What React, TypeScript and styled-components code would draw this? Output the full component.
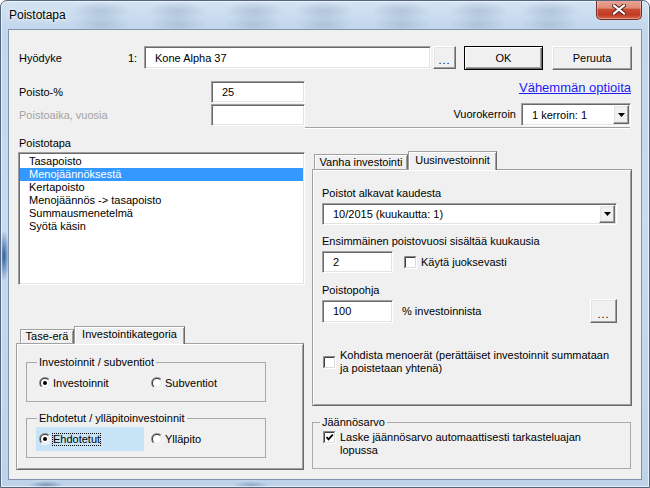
import React, { useId } from 'react';
import styled, { createGlobalStyle, css } from 'styled-components';

const FONT = `'Liberation Sans', Arial, sans-serif`;

const GlobalStyle = createGlobalStyle`
  html, body { margin: 0; padding: 0; background: #ffffff; }
  body { font-family: ${FONT}; font-size: 11px; color: #000; }
  *, *::before, *::after { box-sizing: border-box; }
`;

const sunken = css`
  border: 1px solid;
  border-color: #a0a0a0 #ffffff #ffffff #a0a0a0;
  box-shadow: inset 1px 1px 0 #696969, inset -1px -1px 0 #e3e3e3;
`;

const raised = css`
  border: 1px solid;
  border-color: #ffffff #696969 #696969 #ffffff;
  box-shadow: inset -1px -1px 0 #a0a0a0, inset 1px 1px 0 #e3e3e3;
  background: #f0f0f0;
`;

const blobXs = [100, 176, 253, 323, 400, 478, 549];
const titleBlobs = blobXs
  .flatMap((x) => [
    `radial-gradient(ellipse 30px 10px at ${x}px 10px, rgba(80,104,138,0.22), rgba(80,104,138,0))`,
    `radial-gradient(ellipse 30px 10px at ${x}px 23px, rgba(80,104,138,0.2), rgba(80,104,138,0))`,
  ])
  .join(', ');

const Window = styled.div`
  width: 650px;
  height: 488px;
  display: flex;
  flex-direction: column;
  padding: 0 7px 7px;
  border: 1px solid #52677f;
  border-radius: 7px 7px 0 0;
  overflow: hidden;
  background: ${titleBlobs},
    radial-gradient(ellipse 5px 26px at 3px 255px, rgba(20, 70, 140, 0.85), rgba(20, 70, 140, 0)),
    radial-gradient(ellipse 18px 4px at 45px 484px, rgba(60, 90, 130, 0.5), rgba(60, 90, 130, 0)),
    radial-gradient(ellipse 18px 4px at 250px 484px, rgba(60, 90, 130, 0.35), rgba(60, 90, 130, 0)),
    linear-gradient(180deg, #d3e3f3 0px, #c2d7ec 28px, #c8dbef 220px, #bed3e9 487px);
  box-shadow: inset 0 0 0 1px rgba(255, 255, 255, 0.6);
`;

const TitleBar = styled.header`
  height: 28px;
  flex: none;
  display: flex;
  justify-content: space-between;
  align-items: flex-start;
`;

const Title = styled.h1`
  margin: 7px 0 0 1px;
  font: 12px/14px ${FONT};
  font-weight: normal;
  color: #000;
  text-shadow: 0 0 6px #fff, 0 0 3px #fff;
`;

const CloseButton = styled.button`
  margin-top: -1px;
  width: 46px;
  height: 20px;
  padding: 0;
  border: 1px solid #6e3026;
  border-top: none;
  border-radius: 0 0 5px 5px;
  background: linear-gradient(180deg, #eaa898 0%, #de8a75 42%, #c94a33 50%, #c23a23 78%, #d66a50 100%);
  box-shadow: inset 0 0 0 1px rgba(255, 210, 200, 0.45);
  display: flex;
  align-items: center;
  justify-content: center;
`;

const Client = styled.main`
  flex: 1;
  background: #f0f0f0;
  border: 1px solid #7f93aa;
  padding: 16px 9px 0 7px;
  display: flex;
  flex-direction: column;
`;

const TopRow = styled.div`
  display: flex;
  align-items: flex-start;
  height: 24px;
`;

const RowLabel = styled.span<{ $w?: number; $ml?: number; $disabled?: boolean }>`
  flex: none;
  align-self: center;
  width: ${(p) => (p.$w ? `${p.$w}px` : 'auto')};
  margin-left: ${(p) => p.$ml ?? 0}px;
  color: ${(p) => (p.$disabled ? '#a3a3a3' : '#000')};
  line-height: 13px;
  white-space: nowrap;
`;

const TextBox = styled.div<{ $w: number; $h: number }>`
  ${sunken};
  flex: none;
  background: #fff;
  width: ${(p) => p.$w}px;
  height: ${(p) => p.$h}px;
  display: flex;
  align-items: center;
  padding-left: 10px;
  white-space: nowrap;
`;

const Button = styled.button<{ $w: number; $h: number; $ml?: number; $default?: boolean }>`
  ${raised};
  flex: none;
  width: ${(p) => p.$w}px;
  height: ${(p) => p.$h}px;
  margin-left: ${(p) => p.$ml ?? 0}px;
  padding: 0;
  font: 11px/13px ${FONT};
  color: #000;
  display: flex;
  align-items: center;
  justify-content: center;
  ${(p) =>
    p.$default &&
    css`
      border: 1px solid #000;
      box-shadow: inset 1px 1px 0 #fff, inset -1px -1px 0 #696969, inset -2px -2px 0 #a0a0a0;
    `}
`;

const DotsLabel = styled.span`
  padding-top: 6px;
  letter-spacing: 1px;
`;

const OptionsRow = styled.div`
  display: flex;
  justify-content: space-between;
  margin-top: 11px;
`;

const ParamGrid = styled.div`
  display: grid;
  grid-template-columns: 192px 94px;
  grid-template-rows: 22px 22px;
  row-gap: 1px;
  margin-left: 3px;
  align-items: center;
`;

const OptionsRight = styled.div`
  display: flex;
  flex-direction: column;
  align-items: flex-end;
  margin-top: -1px;
  padding-right: 1px;
`;

const Link = styled.a`
  font: 13px/15px ${FONT};
  height: 15px;
  color: #1d1df2;
  text-decoration: underline;
`;

const ShiftRow = styled.div`
  display: flex;
  align-items: center;
  gap: 5px;
  margin-top: 8px;
`;

const ComboBox = styled.div<{ $w: number; $h: number; $mt?: number }>`
  ${sunken};
  flex: none;
  width: ${(p) => p.$w}px;
  height: ${(p) => p.$h}px;
  margin-top: ${(p) => p.$mt ?? 0}px;
  background: #fff;
  display: flex;
  align-items: stretch;
`;

const ComboText = styled.span`
  flex: 1;
  display: flex;
  align-items: center;
  padding-left: 10px;
  white-space: nowrap;
`;

const DropButton = styled.span`
  ${raised};
  width: 16px;
  margin: 1px 1px 1px 0;
  display: flex;
  align-items: center;
  justify-content: center;
`;

const Separator = styled.div`
  margin: 1px 0 0 289px;
  width: 325px;
  height: 2px;
  border-top: 1px solid #a0a0a0;
  border-bottom: 1px solid #ffffff;
`;

const MainArea = styled.div`
  display: flex;
  align-items: flex-start;
  gap: 7px;
  margin-top: 8px;
`;

const LeftColumn = styled.section`
  width: 289px;
  display: flex;
  flex-direction: column;
`;

const RightColumn = styled.section`
  width: 320px;
  display: flex;
  flex-direction: column;
`;

const FieldLabel = styled.div<{ $mt?: number; $ml?: number }>`
  margin-top: ${(p) => p.$mt ?? 0}px;
  margin-left: ${(p) => p.$ml ?? 0}px;
  line-height: 13px;
  height: 13px;
  white-space: nowrap;
`;

const ListBox = styled.ul`
  ${sunken};
  background: #fff;
  width: 287px;
  height: 133px;
  margin: 2px 0 0 2px;
  padding: 2px 1px 0 1px;
  list-style: none;
`;

const ListItem = styled.li<{ $selected?: boolean }>`
  height: 13px;
  line-height: 13px;
  padding-left: 9px;
  white-space: nowrap;
  background: ${(p) => (p.$selected ? '#3399ff' : 'transparent')};
  color: ${(p) => (p.$selected ? '#fff' : '#000')};
`;

const TabStrip = styled.div<{ $h: number; $pl: number; $mt: number }>`
  display: flex;
  align-items: flex-end;
  height: ${(p) => p.$h}px;
  padding-left: ${(p) => p.$pl}px;
  margin-top: ${(p) => p.$mt}px;
`;

const Tab = styled.div<{ $w: number; $h: number; $active?: boolean }>`
  flex: none;
  width: ${(p) => p.$w}px;
  height: ${(p) => p.$h}px;
  background: #f0f0f0;
  border: 1px solid;
  border-bottom: none;
  border-color: #a0a0a0 #696969 transparent #a0a0a0;
  box-shadow: inset 1px 1px 0 #fff, inset -1px 0 0 #a0a0a0;
  display: flex;
  align-items: center;
  justify-content: center;
  white-space: nowrap;
  line-height: 13px;
  ${(p) =>
    p.$active &&
    css`
      position: relative;
      z-index: 1;
      margin-bottom: -1px;
      padding-bottom: 2px;
    `}
`;

const Panel = styled.div<{ $w: number; $h: number }>`
  width: ${(p) => p.$w}px;
  height: ${(p) => p.$h}px;
  background: #f0f0f0;
  border: 1px solid;
  border-color: #a0a0a0 #696969 #696969 #a0a0a0;
  box-shadow: inset 1px 1px 0 #fff, inset -1px -1px 0 #a0a0a0;
`;

const CategoryPanel = styled(Panel)`
  padding: 12px 0 0 9px;
  display: flex;
  flex-direction: column;
  gap: 10px;
`;

const InvestPanel = styled(Panel)`
  padding: 17px 14px 0 9px;
  display: flex;
  flex-direction: column;
`;

const GroupBox = styled.fieldset<{ $w: number; $mt?: number }>`
  width: ${(p) => p.$w}px;
  min-width: 0;
  margin: ${(p) => p.$mt ?? 0}px 0 0;
  padding: 0;
  border: 1px solid #a9a9a9;
`;

const GroupLegend = styled.legend<{ $ml: number }>`
  margin-left: ${(p) => p.$ml}px;
  padding: 0 2px;
  font: 11px/13px ${FONT};
  color: #000;
`;

const RadioRow = styled.div`
  display: flex;
  gap: 4px;
  margin-top: 2px;
  padding: 0 0 6px 9px;
`;

const RadioItem = styled.label<{ $w: number; $highlight?: boolean }>`
  width: ${(p) => p.$w}px;
  height: 24px;
  padding-left: 3px;
  display: flex;
  align-items: center;
  gap: 1px;
  background: ${(p) => (p.$highlight ? '#c7e3f6' : 'transparent')};
`;

const OptionText = styled.span<{ $focus?: boolean }>`
  line-height: 11px;
  border: 1px dotted ${(p) => (p.$focus ? '#000' : 'transparent')};
  white-space: nowrap;
`;

const InputRow = styled.div<{ $mt: number }>`
  display: flex;
  align-items: center;
  height: 24px;
  margin-top: ${(p) => p.$mt}px;
`;

const InlineText = styled.span<{ $ml: number }>`
  margin-left: ${(p) => p.$ml}px;
  white-space: nowrap;
  line-height: 13px;
`;

const Spacer = styled.span`
  flex: 1;
`;

const CheckRow = styled.label<{ $mt?: number; $top?: boolean; $pl?: number; $pb?: number }>`
  display: flex;
  align-items: ${(p) => (p.$top ? 'flex-start' : 'center')};
  gap: 4px;
  margin-top: ${(p) => p.$mt ?? 0}px;
  padding: 0 0 ${(p) => p.$pb ?? 0}px ${(p) => p.$pl ?? 1}px;
`;

const CheckText = styled.span`
  line-height: 13px;
  white-space: nowrap;
`;

const BoxGlyph = styled.svg`
  flex: none;
  display: block;
`;

function Radio({ checked }: { checked?: boolean }) {
  const id = useId().replace(/:/g, '');
  return (
    <BoxGlyph width="12" height="12" viewBox="0 0 12 12">
      <defs>
        <linearGradient id={`o${id}`} x1="0" y1="0" x2="1" y2="1">
          <stop offset="0.5" stopColor="#8a8a8a" />
          <stop offset="0.5" stopColor="#ffffff" />
        </linearGradient>
        <linearGradient id={`i${id}`} x1="0" y1="0" x2="1" y2="1">
          <stop offset="0.5" stopColor="#404040" />
          <stop offset="0.5" stopColor="#dcdcdc" />
        </linearGradient>
      </defs>
      <circle cx="6" cy="6" r="6" fill={`url(#o${id})`} />
      <circle cx="6" cy="6" r="5" fill={`url(#i${id})`} />
      <circle cx="6" cy="6" r="4" fill="#ffffff" />
      {checked && <circle cx="6" cy="6" r="2" fill="#000" />}
    </BoxGlyph>
  );
}

function CheckBox({ checked }: { checked?: boolean }) {
  return (
    <BoxGlyph width="13" height="13" viewBox="0 0 13 13">
      <rect x="0" y="0" width="13" height="13" fill="#fff" />
      <path d="M0.5 12.5 V0.5 H12.5" stroke="#8a8a8a" fill="none" />
      <path d="M1.5 11.5 V1.5 H11.5" stroke="#404040" fill="none" />
      <path d="M0.5 12.5 H12.5 V0.5" stroke="#ffffff" fill="none" />
      <path d="M1.5 11.5 H11.5 V1.5" stroke="#dcdcdc" fill="none" />
      {checked && <path d="M3.5 6 L5.5 8.3 L9.8 3.6" stroke="#000" strokeWidth="1.8" fill="none" />}
    </BoxGlyph>
  );
}

function Arrow() {
  return (
    <svg width="7" height="4" viewBox="0 0 7 4">
      <path d="M0 0 H7 L3.5 4 Z" fill="#000" />
    </svg>
  );
}

const methods = [
  'Tasapoisto',
  'Menojäännöksestä',
  'Kertapoisto',
  'Menojäännös -> tasapoisto',
  'Summausmenetelmä',
  'Syötä käsin',
];

export default function App() {
  return (
    <>
      <GlobalStyle />
      <Window>
        <TitleBar>
          <Title>Poistotapa</Title>
          <CloseButton aria-label="Sulje">
            <svg width="14" height="11" viewBox="0 0 14 11">
              <path d="M2 1.5 L12 9.5 M12 1.5 L2 9.5" stroke="#4a1d16" strokeWidth="4" strokeLinecap="square" />
              <path d="M2 1.5 L12 9.5 M12 1.5 L2 9.5" stroke="#ffffff" strokeWidth="2.2" strokeLinecap="square" />
            </svg>
          </CloseButton>
        </TitleBar>
        <Client>
          <TopRow>
            <RowLabel $w={109} $ml={3}>Hyödyke</RowLabel>
            <RowLabel $w={16}>1:</RowLabel>
            <TextBox $w={287} $h={23}>Kone Alpha 37</TextBox>
            <Button $w={23} $h={23} $ml={2}>
              <DotsLabel>...</DotsLabel>
            </Button>
            <Button $w={79} $h={24} $ml={8} $default>OK</Button>
            <Button $w={80} $h={24} $ml={9}>Peruuta</Button>
          </TopRow>

          <OptionsRow>
            <ParamGrid>
              <RowLabel>Poisto-%</RowLabel>
              <TextBox $w={94} $h={22}>25</TextBox>
              <RowLabel $disabled>Poistoaika, vuosia</RowLabel>
              <TextBox $w={94} $h={22} />
            </ParamGrid>
            <OptionsRight>
              <Link href="#">Vähemmän optioita</Link>
              <ShiftRow>
                <RowLabel>Vuorokerroin</RowLabel>
                <ComboBox $w={110} $h={23}>
                  <ComboText>1 kerroin: 1</ComboText>
                  <DropButton>
                    <Arrow />
                  </DropButton>
                </ComboBox>
              </ShiftRow>
            </OptionsRight>
          </OptionsRow>
          <Separator />

          <MainArea>
            <LeftColumn>
              <FieldLabel $ml={3}>Poistotapa</FieldLabel>
              <ListBox>
                {methods.map((m) => (
                  <ListItem key={m} $selected={m === 'Menojäännöksestä'}>
                    {m}
                  </ListItem>
                ))}
              </ListBox>

              <TabStrip $h={17} $pl={4} $mt={41}>
                <Tab $w={54} $h={14}>Tase-erä</Tab>
                <Tab $w={111} $h={18} $active>Investointikategoria</Tab>
              </TabStrip>
              <CategoryPanel $w={288} $h={127}>
                <GroupBox $w={240}>
                  <GroupLegend $ml={10}>Investoinnit / subventiot</GroupLegend>
                  <RadioRow>
                    <RadioItem $w={108}>
                      <Radio checked />
                      <OptionText>Investoinnit</OptionText>
                    </RadioItem>
                    <RadioItem $w={100}>
                      <Radio />
                      <OptionText>Subventiot</OptionText>
                    </RadioItem>
                  </RadioRow>
                </GroupBox>
                <GroupBox $w={240}>
                  <GroupLegend $ml={10}>Ehdotetut / ylläpitoinvestoinnit</GroupLegend>
                  <RadioRow>
                    <RadioItem $w={108} $highlight>
                      <Radio checked />
                      <OptionText $focus>Ehdotetut</OptionText>
                    </RadioItem>
                    <RadioItem $w={100}>
                      <Radio />
                      <OptionText>Ylläpito</OptionText>
                    </RadioItem>
                  </RadioRow>
                </GroupBox>
              </CategoryPanel>
            </LeftColumn>

            <RightColumn>
              <TabStrip $h={18} $pl={2} $mt={14}>
                <Tab $w={94} $h={15}>Vanha investointi</Tab>
                <Tab $w={89} $h={19} $active>Uusinvestoinnit</Tab>
              </TabStrip>
              <InvestPanel $w={320} $h={237}>
                <FieldLabel>Poistot alkavat kaudesta</FieldLabel>
                <ComboBox $w={295} $h={22} $mt={3}>
                  <ComboText>10/2015 (kuukautta: 1)</ComboText>
                  <DropButton>
                    <Arrow />
                  </DropButton>
                </ComboBox>
                <FieldLabel $mt={10}>Ensimmäinen poistovuosi sisältää kuukausia</FieldLabel>
                <InputRow $mt={2}>
                  <TextBox $w={71} $h={22}>2</TextBox>
                  <CheckRow $pl={11}>
                    <CheckBox />
                    <CheckText>Käytä juoksevasti</CheckText>
                  </CheckRow>
                </InputRow>
                <FieldLabel $mt={10}>Poistopohja</FieldLabel>
                <InputRow $mt={2}>
                  <TextBox $w={71} $h={23}>100</TextBox>
                  <InlineText $ml={9}>% investoinnista</InlineText>
                  <Spacer />
                  <Button $w={27} $h={24}>
                    <DotsLabel>...</DotsLabel>
                  </Button>
                </InputRow>
                <CheckRow $mt={26}>
                  <CheckBox />
                  <CheckText>
                    Kohdista menoerät (perättäiset investoinnit summataan
                    <br />
                    ja poistetaan yhtenä)
                  </CheckText>
                </CheckRow>
              </InvestPanel>

              <GroupBox $w={319} $mt={10}>
                <GroupLegend $ml={7}>Jäännösarvo</GroupLegend>
                <CheckRow $mt={2} $top $pl={10} $pb={11}>
                  <CheckBox checked />
                  <CheckText>
                    Laske jäännösarvo automaattisesti tarkasteluajan
                    <br />
                    lopussa
                  </CheckText>
                </CheckRow>
              </GroupBox>
            </RightColumn>
          </MainArea>
        </Client>
      </Window>
    </>
  );
}
